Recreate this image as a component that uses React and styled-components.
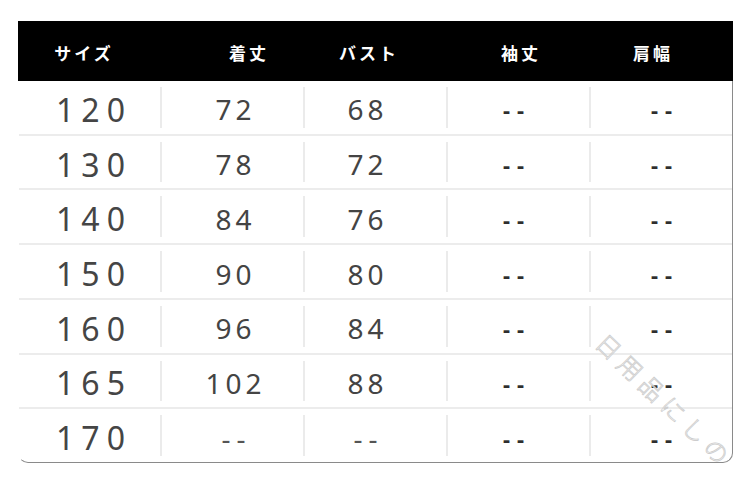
import React from "react";
import styled, { createGlobalStyle } from "styled-components";

const Global = createGlobalStyle`
  html, body { margin: 0; padding: 0; background: #fff; }
  body { font-family: "Noto Sans", "Noto Sans CJK JP", sans-serif; }
`;

const Page = styled.div`
  width: 750px;
  height: 485px;
  padding: 21px 17px 0 18px;
  box-sizing: border-box;
  position: relative;
  overflow: hidden;
`;

const Table = styled.div`
  width: 715px;
  display: flex;
  flex-direction: column;
`;

const Header = styled.div`
  height: 60px;
  background: #000;
  display: grid;
  grid-template-columns: repeat(5, 1fr);
  align-items: center;
`;

const HeadCell = styled.div`
  color: #fff;
  font-family: "Noto Sans CJK JP", sans-serif;
  font-weight: 700;
  font-size: 17px;
  letter-spacing: 3px;
  text-align: center;
  padding-left: ${(p) => (p.$shift > 0 ? p.$shift * 2 : 0) + 3}px;
  padding-right: ${(p) => (p.$shift < 0 ? -p.$shift * 2 : 0)}px;
  padding-top: 2px;
`;

const Body = styled.div`
  height: 382px;
  box-sizing: border-box;
  display: flex;
  flex-direction: column;
  border-right: 1.5px solid #8a8a8a;
  border-bottom: 1.5px solid #8a8a8a;
  border-left: 1px solid transparent;
  border-bottom-left-radius: 10px;
  border-bottom-right-radius: 10px;
`;

const Row = styled.div`
  flex: 1;
  display: grid;
  grid-template-columns: 143px 143px 143px 143px 1fr;
  border-bottom: ${(p) => (p.$last ? "none" : "2px solid #ececec")};
`;

const Cell = styled.div`
  position: relative;
  display: flex;
  align-items: center;
  justify-content: center;
  padding-top: 4px;
  padding-right: ${(p) => p.$pr || 0}px;
  &::before {
    content: "";
    display: ${(p) => (p.$first ? "none" : "block")};
    position: absolute;
    left: -2px;
    top: 6px;
    bottom: 6px;
    width: 1.5px;
    background: #ebebeb;
  }
`;

const SizeText = styled.span`
  font-family: "Noto Sans", sans-serif;
  font-size: 32px;
  color: #454545;
  letter-spacing: 7px;
  padding-left: 7px;
`;

const NumText = styled.span`
  font-family: "Noto Sans", sans-serif;
  font-size: 28px;
  color: #444;
  letter-spacing: 4px;
  padding-left: 4px;
`;

const Dash = styled.span`
  font-family: "Noto Sans", sans-serif;
  font-size: ${(p) => (p.$bold ? 22 : 28)}px;
  font-weight: ${(p) => (p.$bold ? 700 : 400)};
  color: ${(p) => (p.$bold ? "#2e2e2e" : "#555")};
  letter-spacing: ${(p) => (p.$bold ? 7 : 6)}px;
  padding-left: ${(p) => (p.$bold ? 7 : 6)}px;
`;

const Watermark = styled.div`
  position: absolute;
  left: 601px;
  top: 320px;
  transform: rotate(44deg);
  transform-origin: left center;
  font-family: "Noto Sans CJK JP", sans-serif;
  font-size: 24px;
  font-weight: 300;
  letter-spacing: 6px;
  color: rgba(255, 255, 255, 0.5);
  -webkit-text-stroke: 0.8px #cdcdcd;
  white-space: nowrap;
  pointer-events: none;
`;

const headers = [
  { t: "サイズ", s: -7 },
  { t: "着丈", s: 15 },
  { t: "バスト", s: -8 },
  { t: "袖丈", s: 1 },
  { t: "肩幅", s: -10 },
];

const rows = [
  ["120", "72", "68"],
  ["130", "78", "72"],
  ["140", "84", "76"],
  ["150", "90", "80"],
  ["160", "96", "84"],
  ["165", "102", "88"],
  ["170", null, null],
];

export default function App() {
  return (
    <>
      <Global />
      <Page>
        <Table>
          <Header>
            {headers.map((h) => (
              <HeadCell key={h.t} $shift={h.s}>
                {h.t}
              </HeadCell>
            ))}
          </Header>
          <Body>
            {rows.map((r, i) => (
              <Row key={r[0]} $last={i === rows.length - 1}>
                <Cell $first>
                  <SizeText>{r[0]}</SizeText>
                </Cell>
                <Cell>{r[1] ? <NumText>{r[1]}</NumText> : <Dash>--</Dash>}</Cell>
                <Cell $pr={22}>{r[2] ? <NumText>{r[2]}</NumText> : <Dash>--</Dash>}</Cell>
                <Cell $pr={12}>
                  <Dash $bold>--</Dash>
                </Cell>
                <Cell>
                  <Dash $bold>--</Dash>
                </Cell>
              </Row>
            ))}
          </Body>
        </Table>
        <Watermark>日用品にしの</Watermark>
      </Page>
    </>
  );
}
